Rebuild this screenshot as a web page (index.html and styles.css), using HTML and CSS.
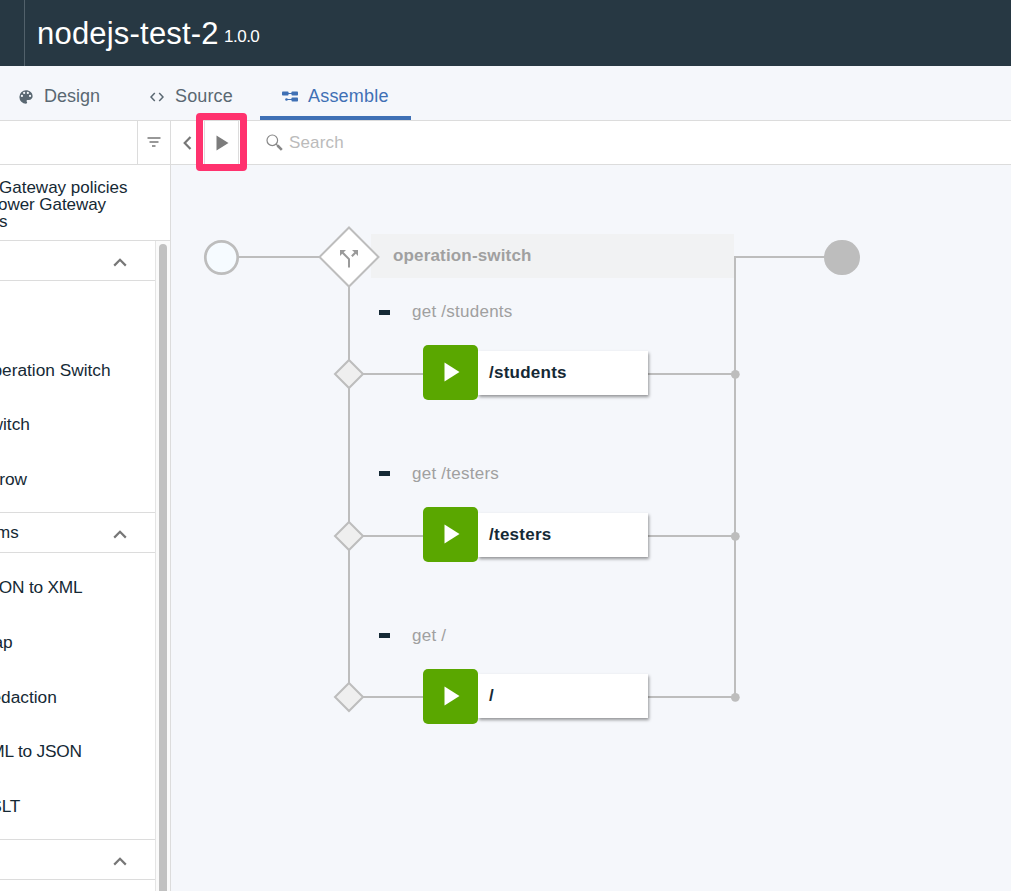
FILE: index.html
```
<!DOCTYPE html>
<html lang="en">
<head>
<meta charset="utf-8">
<title>nodejs-test-2</title>
<link rel="stylesheet" href="styles.css">
</head>
<body>
<header class="topbar">
  <div class="topbar-rail"></div>
  <h1 class="title">nodejs-test-2</h1>
  <span class="version">1.0.0</span>
</header>
<nav class="tabs">
  <a class="tab tab-design">
    <svg class="tab-icon" width="14" height="14" viewBox="2.5 2.5 19 19"><path fill="#5a6872" d="M12 3a9 9 0 0 0 0 18c.83 0 1.5-.67 1.5-1.5 0-.39-.15-.74-.39-1.01-.23-.26-.38-.61-.38-.99 0-.83.67-1.5 1.5-1.5H16c2.76 0 5-2.24 5-5 0-4.42-4.03-8-9-8zm-5.5 9a1.5 1.5 0 1 1 0-3 1.5 1.5 0 0 1 0 3zm3-4a1.5 1.5 0 1 1 0-3 1.5 1.5 0 0 1 0 3zm5 0a1.5 1.5 0 1 1 0-3 1.5 1.5 0 0 1 0 3zm3 4a1.5 1.5 0 1 1 0-3 1.5 1.5 0 0 1 0 3z"/></svg>
    <span>Design</span>
  </a>
  <a class="tab tab-source">
    <svg class="tab-icon" width="14" height="10" viewBox="0 0 14 10"><path fill="none" stroke="#5a6872" stroke-width="1.5" d="M4.8 1 1 5l3.800 4M9.200 1 13 5 9.200 9"/></svg>
    <span>Source</span>
  </a>
  <a class="tab tab-assemble">
    <svg class="tab-icon" width="16" height="11" viewBox="0 0 16 11"><path fill="none" stroke="#3f70b5" stroke-width="1" d="M5 2.500h6M4 8.500h6"/><g fill="#3f70b5"><rect y="0.500" width="6.500" height="4" rx=".8"/><rect x="9.500" y="0.500" width="6.500" height="4" rx=".8"/><rect x="9.500" y="6.500" width="6.500" height="4" rx=".8"/><circle cx="4.500" cy="8.500" r="1.300"/></g></svg>
    <span>Assemble</span>
  </a>
</nav>
<div class="toolbar">
  <div class="filter-space"></div>
  <button class="tool filter"><svg width="14" height="10" viewBox="0 0 14 10"><path stroke="#777" stroke-width="1.500" d="M.5 1h13M2.500 5h9M5 9h3.500"/></svg></button>
  <button class="tool collapse"><svg width="9" height="14" viewBox="0 0 9 14"><path fill="none" stroke="#777" stroke-width="2.200" d="M7.500 1 1.700 7l5.800 6"/></svg></button>
  <button class="tool play"><svg width="13" height="16" viewBox="0 0 13 16"><path fill="#7c7c7c" d="M.5.5 12.500 8 .5 15.500z"/></svg></button>
  <div class="search">
    <svg width="17" height="17" viewBox="0 0 17 17"><circle cx="6.300" cy="6.300" r="5.300" fill="none" stroke="#888" stroke-width="1.200"/><path stroke="#888" stroke-width="1.200" d="m10 10 2 2"/><path stroke="#888" stroke-width="2.600" d="m11.500 11.500 4.300 4.300"/></svg>
    <span>Search</span>
  </div>
  <div class="highlight"></div>
</div>
<main class="workspace">
  <aside class="sidebar">
    <div class="intro"><div>Gateway policies</div><div class="intro-second">ower Gateway</div><div>s</div></div>
    <div class="palette">
      <div class="palette-list">
        <div class="section"><span></span><svg class="chevron" width="14" height="9" viewBox="0 0 14 9"><path d="m1.200 7.600 5.800-5.800 5.800 5.800"/></svg></div>
        <ul class="items"><li></li><li>Operation Switch</li><li>Switch</li><li>Throw</li></ul>
        <div class="section"><span>ms</span><svg class="chevron" width="14" height="9" viewBox="0 0 14 9"><path d="m1.200 7.600 5.800-5.800 5.800 5.800"/></svg></div>
        <ul class="items"><li class="caps">JSON to XML</li><li>Map</li><li>Redaction</li><li class="caps">XML to JSON</li><li class="caps">XSLT</li></ul>
        <div class="section"><span></span><svg class="chevron" width="14" height="9" viewBox="0 0 14 9"><path d="m1.200 7.600 5.800-5.800 5.800 5.800"/></svg></div>
      </div>
      <div class="scroll-track"><div class="scroll-thumb"></div></div>
    </div>
  </aside>
  <section class="canvas">
    <div class="switch-label">operation-switch</div>
    <svg class="wires" width="840" height="726" viewBox="171 165 840 726">
      <g fill="none" stroke="#bdbdbd" stroke-width="2">
        <path d="M238 257h82M349 286v411M363 374h372M363 536h372M363 697h372M735 697V257h90"/>
        <path fill="#fff" d="m349 227.500 29.500 29.500-29.500 29.500-29.500-29.500z"/>
        <path fill="#efefef" d="m349 360 14 14-14 14-14-14zM349 522l14 14-14 14-14-14zM349 683l14 14-14 14-14-14z"/>
        <circle cx="221.500" cy="257.500" r="16.200" fill="#f6fbff" stroke-width="2.700"/>
      </g>
      <g fill="#bdbdbd">
        <rect x="824" y="240" width="36" height="35" rx="17.500"/>
        <circle cx="735.300" cy="374.300" r="4.400"/><circle cx="735.300" cy="536.300" r="4.400"/><circle cx="735.300" cy="697.300" r="4.400"/>
      </g>
      <path fill="#9a9a9a" d="m352 250 2.300 2.300-3.200 3.200 1.500 1.500 3.200-3.200 2.200 2.200v-6zM346 250h-6v6l2.200-2.200 5.800 5.700v8h2v-8.800l-6.300-6.400z"/>
    </svg>
    <div class="branch branch-students"><i class="toggle"></i><span>get /students</span></div>
    <div class="node node-students"><div class="node-icon"><svg width="16" height="20" viewBox="0 0 16 20"><path fill="#fff" d="M.5.5 15.500 10 .5 19.500z"/></svg></div><div class="node-label">/students</div></div>
    <div class="branch branch-testers"><i class="toggle"></i><span>get /testers</span></div>
    <div class="node node-testers"><div class="node-icon"><svg width="16" height="20" viewBox="0 0 16 20"><path fill="#fff" d="M.5.5 15.500 10 .5 19.500z"/></svg></div><div class="node-label">/testers</div></div>
    <div class="branch branch-root"><i class="toggle"></i><span>get /</span></div>
    <div class="node node-root"><div class="node-icon"><svg width="16" height="20" viewBox="0 0 16 20"><path fill="#fff" d="M.5.5 15.500 10 .5 19.500z"/></svg></div><div class="node-label">/</div></div>
  </section>
</main>
</body>
</html>
```
FILE: styles.css
```
* { box-sizing: border-box; }
body {
  margin: 0;
  height: 891px;
  display: flex;
  flex-direction: column;
  overflow: hidden;
  background: #f5f7fb;
  color: #152935;
  font-family: "Liberation Sans", Arial, sans-serif;
  font-size: 17px;
}
svg { display: block; flex: none; }
.topbar {
  flex: none;
  display: flex;
  height: 66px;
  background: #273843;
  color: #fff;
  white-space: nowrap;
}
.topbar-rail { width: 25px; border-right: 1px solid #52616b; }
.title {
  margin: 0 0 0 12px;
  width: 187px;
  font-size: 31px;
  font-weight: 400;
  line-height: 67px;
  letter-spacing: 0.2px;
}
.version { font-size: 17px; line-height: 73px; letter-spacing: -0.5px; }
.tabs {
  flex: none;
  display: flex;
  height: 54px;
  padding-left: 19px;
  color: #5a6872;
  font-size: 18px;
}
.tab { display: flex; align-items: center; padding-top: 7px; white-space: nowrap; }
.tab-design { width: 131px; gap: 11px; }
.tab-source { width: 110px; gap: 11px; letter-spacing: 0.15px; }
.tab-assemble {
  width: 151px;
  padding-left: 22px;
  padding-top: 11px;
  gap: 10px;
  color: #3f70b5;
  border-bottom: 4px solid #3f70b5;
  letter-spacing: 0.2px;
}
.toolbar {
  position: relative;
  flex: none;
  display: flex;
  height: 45px;
  background: #fff;
  border-top: 1px solid #dcdcdc;
  border-bottom: 1px solid #dcdcdc;
}
.filter-space { width: 137px; }
.tool {
  display: flex;
  align-items: center;
  justify-content: center;
  padding: 0;
  border: 0;
  border-left: 1px solid #dcdcdc;
  background: #fff;
}
.filter { width: 33px; padding-bottom: 1px; }
.collapse { width: 34px; padding-right: 1px; }
.play { width: 35px; padding-left: 2px; border-right: 1px solid #dcdcdc; }
.search { display: flex; align-items: center; gap: 6px; padding-left: 27px; color: #bbb; letter-spacing: 0.15px; }
.search svg { margin-top: -1px; }
.highlight {
  position: absolute;
  left: 196px;
  top: -8px;
  width: 51px;
  height: 58px;
  border: 7px solid #ff326e;
  border-radius: 4px;
}
.workspace { flex: 1; min-height: 0; display: flex; }
.sidebar {
  flex: none;
  width: 171px;
  display: flex;
  flex-direction: column;
  background: #fff;
  border-right: 1px solid #dcdcdc;
  overflow: hidden;
}
.intro {
  flex: none;
  height: 76px;
  padding-top: 14px;
  border-bottom: 1px solid #dcdcdc;
  line-height: 17px;
  white-space: nowrap;
}
.intro > div { margin-left: -1px; }
.intro > .intro-second { margin-left: -2px; letter-spacing: -0.05px; }
.palette { flex: 1; min-height: 0; display: flex; }
.palette-list { width: 155px; overflow: hidden; }
.section {
  display: flex;
  align-items: center;
  justify-content: space-between;
  height: 40px;
  padding-right: 28px;
  border-bottom: 1px solid #dcdcdc;
}
.items + .section { height: 41px; border-top: 1px solid #dcdcdc; }
.section span { margin-left: -4px; padding-top: 1px; }
.chevron { margin-top: 3px; }
.chevron path { fill: none; stroke: #777; stroke-width: 2.2; }
.items { margin: 0; padding: 7px 0 6px; list-style: none; }
.items li { height: 54.6px; margin-left: -21px; font-size: 17.3px; line-height: 55px; white-space: nowrap; }
.items .caps { letter-spacing: -0.2px; }
.scroll-track { width: 15px; padding: 3px 0 0 3px; background: #fafafa; border-left: 1px solid #e4e4e4; }
.scroll-thumb { width: 8px; height: 660px; border-radius: 4px; background: #c1c1c1; }
.canvas { position: relative; flex: 1; overflow: hidden; }
.wires { position: absolute; left: 0; top: 0; }
.switch-label {
  position: absolute;
  left: 200px;
  top: 69px;
  width: 363px;
  height: 44px;
  padding-left: 22px;
  background: #f1f2f3;
  color: #a0a0a0;
  font-weight: 700;
  line-height: 44px;
  letter-spacing: 0.16px;
}
.branch { position: absolute; left: 208px; display: flex; gap: 22px; height: 22px; color: #a0a0a0; line-height: 23px; letter-spacing: 0.25px; white-space: nowrap; }
.toggle { width: 11px; height: 5px; margin-top: 10px; background: #152935; }
.branch-students { top: 135px; }
.branch-testers { top: 297px; }
.branch-root { top: 459px; }
.branch-testers .toggle, .branch-root .toggle { margin-top: 9px; }
.node { position: absolute; left: 252px; display: flex; align-items: flex-start; height: 55px; }
.node-students { top: 180px; }
.node-testers { top: 342px; }
.node-root { top: 504px; }
.node-icon {
  z-index: 1;
  width: 55px;
  height: 55px;
  padding-left: 3px;
  padding-bottom: 1px;
  display: flex;
  align-items: center;
  justify-content: center;
  background: #5aa700;
  border-radius: 5px;
}
.node-label {
  width: 170px;
  height: 44px;
  margin-top: 6px;
  padding-left: 11px;
  background: #fff;
  box-shadow: 1px 2px 3px rgba(0, 0, 0, 0.4);
  font-weight: 700;
  line-height: 44px;
  letter-spacing: 0.25px;
}
.node-root .node-label { margin-top: 5px; }
```
